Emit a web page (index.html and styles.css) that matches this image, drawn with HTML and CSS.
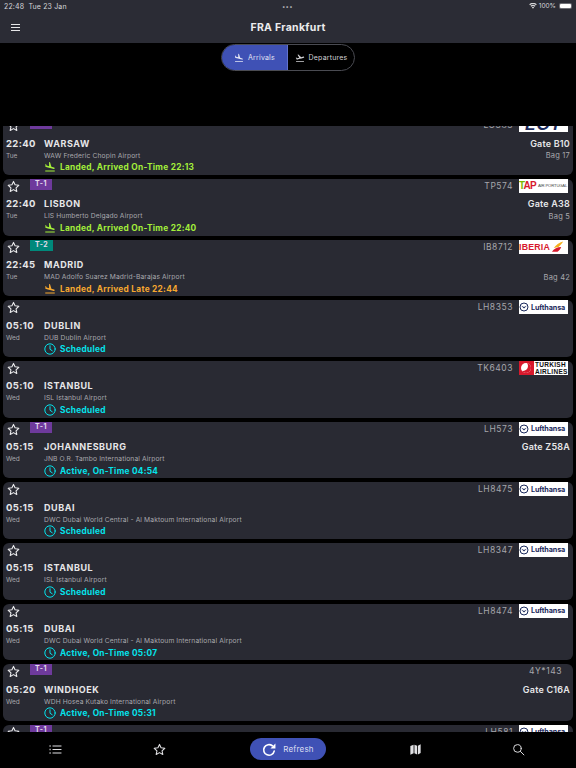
FILE: index.html
```html
<!DOCTYPE html>
<html lang="en">
<head>
    <meta charset="UTF-8">
    <meta name="viewport" content="width=device-width, initial-scale=1.0">
    <title>FRA Frankfurt</title>
    <link rel="stylesheet" href="styles.css">
</head>
<body>
    <svg class="defs" width="0" height="0">
        <symbol id="star" viewBox="0 0 24 24"><path d="M12 2.6l2.9 6.3 6.9.8-5.1 4.7 1.4 6.8-6.1-3.4-6.1 3.4 1.4-6.8-5.1-4.7 6.9-.8z" fill="none" stroke="currentColor" stroke-width="2" stroke-linejoin="round"/></symbol>
        <symbol id="land" viewBox="0 0 24 24"><path fill="currentColor" d="M2.5 19h19v2h-19zm7.18-5.73l4.35 1.16 5.31 1.42c.8.21 1.62-.26 1.84-1.06.21-.8-.26-1.62-1.06-1.84l-5.31-1.42-2.76-9.02L10.12 2v8.28L5.15 8.95l-.93-2.32-1.45-.39v5.17l1.6.43 5.31 1.43z"/></symbol>
        <symbol id="takeoff" viewBox="0 0 24 24"><path fill="currentColor" d="M2.5 19h19v2h-19zm19.57-9.36c-.21-.8-1.04-1.28-1.84-1.06L14.92 10l-6.9-6.43-1.93.51 4.14 7.17-4.97 1.33-1.97-1.54-1.45.39 1.82 3.16.77 1.33 1.6-.43 5.31-1.42 4.35-1.16L21 11.49c.81-.23 1.28-1.05 1.07-1.85z"/></symbol>
        <symbol id="clock" viewBox="0 0 24 24"><g fill="none" stroke="currentColor" stroke-width="2" stroke-linecap="round" stroke-linejoin="round"><circle cx="12" cy="12" r="10.4"/><path d="M12 5.5V12.5l4.5 3"/></g></symbol>
        <symbol id="lufthansa" viewBox="0 0 11 14"><circle cx="5" cy="7" r="4" fill="none" stroke="#1b2a5c" stroke-width="1"/><path d="M2 5.5l3 1.500 3-1.500-3 3z" fill="#1b2a5c"/></symbol>
    </svg>

    <header class="topbar">
        <div class="status">
            <span class="status-left">22:48&nbsp;&nbsp;Tue 23 Jan</span>
            <span class="status-dots">•••</span>
            <span class="status-right">
                <svg class="wifi" viewBox="0 0 16 12"><path fill="currentColor" d="M8 11.5L5.6 8.6a3.6 3.6 0 0 1 4.8 0zM4.5 7.3L3 5.5a7.6 7.6 0 0 1 10 0l-1.5 1.8a5.3 5.3 0 0 0-7 0zM2 4.3L.5 2.5a11.6 11.6 0 0 1 15 0L14 4.3a9.3 9.3 0 0 0-12 0z"/></svg>
                100%
                <span class="battery"><span class="battery-fill"></span></span>
            </span>
        </div>
        <div class="titlebar">
            <span class="burger"><i></i><i></i><i></i></span>
            <h1>FRA Frankfurt</h1>
        </div>
    </header>

    <div class="tabs-wrap">
        <div class="tabs">
            <div class="tab tab-on"><svg class="tab-icon"><use href="#land"/></svg>Arrivals</div>
            <div class="tab"><svg class="tab-icon"><use href="#takeoff"/></svg>Departures</div>
        </div>
    </div>

    <main class="list">
        <div class="list-inner">

            <div class="card">
                <div class="card-top">
                    <svg class="star"><use href="#star"/></svg>
                    <span class="term t1">T-1</span>
                    <span class="code">LO383</span>
                    <span class="logo logo-lot">LOT</span>
                </div>
                <div class="row1"><span class="time">22:40</span><span class="city">WARSAW</span><span class="gate">Gate B10</span></div>
                <div class="row2"><span class="day">Tue</span><span class="airport">WAW Frederic Chopin Airport</span><span class="bag">Bag 17</span></div>
                <div class="state green"><svg class="state-icon"><use href="#land"/></svg>Landed, Arrived On-Time 22:13</div>
            </div>

            <div class="card">
                <div class="card-top">
                    <svg class="star"><use href="#star"/></svg>
                    <span class="term t1">T-1</span>
                    <span class="code">TP574</span>
                    <span class="logo logo-tap"><b><em>T</em>AP</b><small>AIR PORTUGAL</small></span>
                </div>
                <div class="row1"><span class="time">22:40</span><span class="city">LISBON</span><span class="gate">Gate A38</span></div>
                <div class="row2"><span class="day">Tue</span><span class="airport">LIS Humberto Delgado Airport</span><span class="bag">Bag 5</span></div>
                <div class="state green"><svg class="state-icon"><use href="#land"/></svg>Landed, Arrived On-Time 22:40</div>
            </div>

            <div class="card">
                <div class="card-top">
                    <svg class="star"><use href="#star"/></svg>
                    <span class="term t2">T-2</span>
                    <span class="code">IB8712</span>
                    <span class="logo logo-iberia">IBERIA<svg class="swoosh" viewBox="0 0 14 12"><path fill="#f4b01c" d="M13 0C9 1 5 4 3 7l5-1c2-2 4-4 5-6z"/><path fill="#d7192d" d="M1 11c2-3 6-5 10-5-1 2-2 4-4 5z"/></svg></span>
                </div>
                <div class="row1"><span class="time">22:45</span><span class="city">MADRID</span></div>
                <div class="row2"><span class="day">Tue</span><span class="airport">MAD Adolfo Suarez Madrid-Barajas Airport</span><span class="bag">Bag 42</span></div>
                <div class="state orange"><svg class="state-icon"><use href="#land"/></svg>Landed, Arrived Late 22:44</div>
            </div>

            <div class="card">
                <div class="card-top">
                    <svg class="star"><use href="#star"/></svg>
                    <span class="code">LH8353</span>
                    <span class="logo logo-lh"><svg class="crane"><use href="#lufthansa"/></svg>Lufthansa</span>
                </div>
                <div class="row1"><span class="time">05:10</span><span class="city">DUBLIN</span></div>
                <div class="row2"><span class="day">Wed</span><span class="airport">DUB Dublin Airport</span></div>
                <div class="state cyan"><svg class="state-icon"><use href="#clock"/></svg>Scheduled</div>
            </div>

            <div class="card">
                <div class="card-top">
                    <svg class="star"><use href="#star"/></svg>
                    <span class="code">TK6403</span>
                    <span class="logo logo-tk"><span class="tk-mark"></span><span class="tk-name">TURKISH<br>AIRLINES</span></span>
                </div>
                <div class="row1"><span class="time">05:10</span><span class="city">ISTANBUL</span></div>
                <div class="row2"><span class="day">Wed</span><span class="airport">ISL Istanbul Airport</span></div>
                <div class="state cyan"><svg class="state-icon"><use href="#clock"/></svg>Scheduled</div>
            </div>

            <div class="card">
                <div class="card-top">
                    <svg class="star"><use href="#star"/></svg>
                    <span class="term t1">T-1</span>
                    <span class="code">LH573</span>
                    <span class="logo logo-lh"><svg class="crane"><use href="#lufthansa"/></svg>Lufthansa</span>
                </div>
                <div class="row1"><span class="time">05:15</span><span class="city">JOHANNESBURG</span><span class="gate">Gate Z58A</span></div>
                <div class="row2"><span class="day">Wed</span><span class="airport">JNB O.R. Tambo International Airport</span></div>
                <div class="state cyan"><svg class="state-icon"><use href="#clock"/></svg>Active, On-Time 04:54</div>
            </div>

            <div class="card">
                <div class="card-top">
                    <svg class="star"><use href="#star"/></svg>
                    <span class="code">LH8475</span>
                    <span class="logo logo-lh"><svg class="crane"><use href="#lufthansa"/></svg>Lufthansa</span>
                </div>
                <div class="row1"><span class="time">05:15</span><span class="city">DUBAI</span></div>
                <div class="row2"><span class="day">Wed</span><span class="airport">DWC Dubai World Central - Al Maktoum International Airport</span></div>
                <div class="state cyan"><svg class="state-icon"><use href="#clock"/></svg>Scheduled</div>
            </div>

            <div class="card">
                <div class="card-top">
                    <svg class="star"><use href="#star"/></svg>
                    <span class="code">LH8347</span>
                    <span class="logo logo-lh"><svg class="crane"><use href="#lufthansa"/></svg>Lufthansa</span>
                </div>
                <div class="row1"><span class="time">05:15</span><span class="city">ISTANBUL</span></div>
                <div class="row2"><span class="day">Wed</span><span class="airport">ISL Istanbul Airport</span></div>
                <div class="state cyan"><svg class="state-icon"><use href="#clock"/></svg>Scheduled</div>
            </div>

            <div class="card">
                <div class="card-top">
                    <svg class="star"><use href="#star"/></svg>
                    <span class="code">LH8474</span>
                    <span class="logo logo-lh"><svg class="crane"><use href="#lufthansa"/></svg>Lufthansa</span>
                </div>
                <div class="row1"><span class="time">05:15</span><span class="city">DUBAI</span></div>
                <div class="row2"><span class="day">Wed</span><span class="airport">DWC Dubai World Central - Al Maktoum International Airport</span></div>
                <div class="state cyan"><svg class="state-icon"><use href="#clock"/></svg>Active, On-Time 05:07</div>
            </div>

            <div class="card">
                <div class="card-top">
                    <svg class="star"><use href="#star"/></svg>
                    <span class="term t1">T-1</span>
                    <span class="code code-nologo">4Y*143</span>
                </div>
                <div class="row1"><span class="time">05:20</span><span class="city">WINDHOEK</span><span class="gate">Gate C16A</span></div>
                <div class="row2"><span class="day">Wed</span><span class="airport">WDH Hosea Kutako International Airport</span></div>
                <div class="state cyan"><svg class="state-icon"><use href="#clock"/></svg>Active, On-Time 05:31</div>
            </div>

            <div class="card">
                <div class="card-top">
                    <svg class="star"><use href="#star"/></svg>
                    <span class="term t1">T-1</span>
                    <span class="code">LH581</span>
                    <span class="logo logo-lh"><svg class="crane"><use href="#lufthansa"/></svg>Lufthansa</span>
                </div>
            </div>

        </div>
    </main>

    <nav class="bottom">
        <span class="nav-item">
            <svg class="nav-icon" viewBox="0 0 24 24"><g fill="none" stroke="currentColor" stroke-width="2"><path d="M6.5 5.5H23M6.5 12H23M6.5 18.5H23"/><path stroke-dasharray="3 3.5" d="M2 4v17"/></g></svg>
        </span>
        <span class="nav-item"><svg class="nav-icon"><use href="#star"/></svg></span>
        <span class="refresh">
            <svg class="refresh-icon" viewBox="0 0 24 24"><g fill="none" stroke="currentColor" stroke-width="2.6" stroke-linecap="round"><path d="M19.5 14.5a8.5 8.5 0 1 1-3-8.5"/></g><path fill="currentColor" d="M21.5 2.5v8h-8z"/></svg>
            Refresh
        </span>
        <span class="nav-item">
            <svg class="nav-icon" viewBox="0 0 24 24"><path fill="currentColor" d="M2.5 5.5L8.5 3v16l-6 2.5zM10 3l5 2v16l-5-2zM16.500 5L21.500 2.500v16l-5 2.500z"/></svg>
        </span>
        <span class="nav-item">
            <svg class="nav-icon" viewBox="0 0 24 24"><g fill="none" stroke="currentColor" stroke-width="1.8" stroke-linecap="round"><circle cx="10" cy="10" r="7"/><path d="M15.500 15.500L22 22"/></g></svg>
        </span>
    </nav>
</body>
</html>
```

FILE: styles.css
```css
* {
    box-sizing: border-box;
}

body {
    font-family: Inter, "Liberation Sans", sans-serif;
    background-color: #000;
    color: #e6e6e8;
    margin: 0;
    width: 576px;
    height: 768px;
    display: flex;
    flex-direction: column;
    overflow: hidden;
}

.defs {
    position: absolute;
}

/* top bar */
.topbar {
    background: #2b2c35;
    height: 43px;
    flex: none;
}

.status {
    height: 12px;
    padding: 0 4px 0 4px;
    display: flex;
    justify-content: space-between;
    align-items: center;
    font-size: 6.5px;
    color: #d6d6d9;
    position: relative;
}

.status-left {
    font-size: 7px;
    letter-spacing: 0.15px;
}

.status-dots {
    position: absolute;
    left: 282px;
    font-size: 6px;
    letter-spacing: 0.2px;
    color: #b9b9bd;
}

.status-right {
    display: flex;
    align-items: center;
    gap: 2px;
}

.wifi {
    width: 8px;
    height: 6px;
}

.battery {
    width: 13px;
    height: 6.500px;
    margin-left: 1px;
    padding: 1px;
    border-radius: 2px;
    background: #6d6e75;
    display: block;
}

.battery-fill {
    display: block;
    height: 100%;
    background: #fff;
    border-radius: 1px;
}

.titlebar {
    height: 31px;
    display: flex;
    align-items: center;
    justify-content: center;
    position: relative;
}

.titlebar h1 {
    margin: 0;
    font-size: 10.500px;
    font-weight: 700;
    letter-spacing: 0.3px;
    color: #ececee;
}

.burger {
    position: absolute;
    left: 11px;
    top: 12px;
    width: 9px;
    display: flex;
    flex-direction: column;
    gap: 2px;
}

.burger i {
    display: block;
    height: 1px;
    background: #e6e6e8;
}

/* arrivals / departures */
.tabs-wrap {
    flex: none;
    height: 83px;
    display: flex;
    justify-content: center;
    align-items: flex-start;
    padding-top: 1px;
}

.tabs {
    width: 134px;
    height: 27px;
    display: flex;
    border: 1px solid #4a4b52;
    border-radius: 14px;
    overflow: hidden;
}

.tab {
    flex: 1;
    display: flex;
    align-items: center;
    justify-content: center;
    gap: 4px;
    font-size: 7px;
    letter-spacing: 0.2px;
    color: #d4d4d7;
}

.tab-on {
    flex: none;
    width: 66px;
    background: #3f51b5;
    border-right: 1px solid #6272cc;
    color: #e4e6f4;
}

.tab-icon {
    width: 10px;
    height: 10px;
}

/* flight list */
.list {
    flex: 1;
    overflow: hidden;
}

.list-inner {
    margin-top: -7.700px;
    padding: 0 3px;
    display: flex;
    flex-direction: column;
    gap: 4px;
}

.card {
    height: 56.670px;
    flex: none;
    background: #292a33;
    border-radius: 6px;
    padding-right: 3px;
}

.card-top {
    height: 14px;
    display: flex;
    align-items: flex-start;
    padding-right: 2px;
}

.star {
    width: 13px;
    height: 13px;
    margin: 1px 0 0 4px;
    flex: none;
    color: #ececee;
}

.term {
    width: 22px;
    height: 11px;
    margin-left: 10px;
    font-size: 7px;
    font-weight: 700;
    line-height: 10px;
    text-align: center;
    letter-spacing: 0.4px;
    color: #e4dcec;
}

.t1 {
    background: #6e3a9c;
}

.t2 {
    width: 23px;
    background: #00897b;
}

.code {
    margin-left: auto;
    margin-right: 6px;
    font-size: 8.500px;
    line-height: 14px;
    letter-spacing: 0.55px;
    color: #a6a6ab;
}

.code-nologo {
    margin-right: 6px;
}

.logo {
    width: 49px;
    height: 14px;
    flex: none;
    background: #fff;
    display: flex;
    align-items: center;
    overflow: hidden;
    white-space: nowrap;
}

.logo-lot {
    justify-content: center;
    font-family: "Liberation Sans", sans-serif;
    font-style: italic;
    font-weight: 700;
    font-size: 17px;
    line-height: 14px;
    letter-spacing: 1px;
    color: #1b2a5c;
}

.logo-tap b {
    font-family: "Liberation Sans", sans-serif;
    font-size: 10px;
    letter-spacing: -0.8px;
    color: #d7192d;
}

.logo-tap em {
    font-style: normal;
    color: #7ab800;
}

.logo-tap small {
    margin-left: 2px;
    font-family: "Liberation Sans", sans-serif;
    font-size: 4.200px;
    letter-spacing: -0.15px;
    color: #4a4a4a;
}

.logo-iberia {
    font-family: "Liberation Sans", sans-serif;
    font-size: 8.800px;
    font-weight: 700;
    letter-spacing: 0.2px;
    color: #d7192d;
}

.swoosh {
    width: 13px;
    height: 12px;
    margin-left: 1px;
}

.logo-lh {
    font-size: 7.200px;
    font-weight: 700;
    letter-spacing: -0.1px;
    color: #1b2a5c;
}

.crane {
    width: 11px;
    height: 14px;
    margin-right: 1px;
    flex: none;
}

.logo-tk {
    gap: 1px;
}

.tk-mark {
    width: 15px;
    height: 14px;
    flex: none;
    background: #d7192d;
    position: relative;
}

.tk-mark::after {
    content: "";
    position: absolute;
    left: 2px;
    top: 2px;
    width: 10px;
    height: 10px;
    border-radius: 50%;
    background: #fff;
    box-shadow: inset -3px -2px 0 #d7192d;
}

.tk-name {
    font-family: "Liberation Sans", sans-serif;
    font-size: 6.500px;
    font-weight: 700;
    line-height: 7px;
    letter-spacing: 0.3px;
    color: #111;
}

.row1,
.row2 {
    display: flex;
    align-items: center;
    padding-left: 3px;
}

.row1 {
    margin-top: 5px;
    height: 12px;
}

.row2 {
    margin-top: 1px;
    height: 11px;
}

.time {
    width: 38px;
    flex: none;
    font-size: 9.500px;
    font-weight: 700;
    letter-spacing: 0.35px;
}

.city {
    font-size: 9px;
    font-weight: 700;
    letter-spacing: 0.55px;
}

.gate {
    margin-left: auto;
    font-size: 9px;
    font-weight: 600;
    letter-spacing: 0.2px;
}

.day {
    width: 38px;
    flex: none;
    font-size: 6.500px;
    color: #a8a8ad;
}

.airport {
    font-size: 6.700px;
    letter-spacing: 0.12px;
    color: #a8a8ad;
}

.bag {
    margin-left: auto;
    font-size: 7.500px;
    letter-spacing: 0.2px;
    color: #a8a8ad;
}

.state {
    margin: 0 0 0 41px;
    height: 12px;
    display: flex;
    align-items: center;
    gap: 4px;
    font-size: 8.300px;
    font-weight: 700;
    letter-spacing: 0.28px;
}

.state-icon {
    width: 12px;
    height: 12px;
    flex: none;
}

.green {
    color: #a4ef3a;
}

.orange {
    color: #f7a82f;
}

.cyan {
    color: #04e3ec;
}

/* bottom nav */
.bottom {
    flex: none;
    height: 36px;
    position: relative;
    display: grid;
    grid-template-columns: 56px 104px 128px 128px 103px;
    align-items: center;
    justify-items: end;
    padding-bottom: 2px;
}

.nav-item {
    display: flex;
    justify-content: center;
    width: 16px;
    margin-right: -7px;
    color: #e0e0e3;
}

.nav-icon {
    width: 13px;
    height: 13px;
    flex: none;
}

.refresh {
    width: 76px;
    height: 22px;
    margin-right: -38px;
    border-radius: 11px;
    background: #3f51b5;
    display: flex;
    align-items: center;
    justify-content: center;
    gap: 6px;
    font-size: 8px;
    letter-spacing: 0.2px;
    color: #dcdff2;
}

.refresh-icon {
    width: 15px;
    height: 15px;
    color: #fff;
}
```
